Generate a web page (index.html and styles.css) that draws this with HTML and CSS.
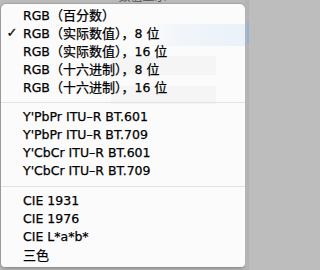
FILE: index.html
```html
<!DOCTYPE html>
<html lang="zh-CN">
<head>
<meta charset="utf-8">
<title>Menu</title>
<link rel="stylesheet" href="styles.css">
</head>
<body>
<div class="top"><span class="top-title">数值显示</span></div>
<div class="stage">
  <div class="menu">
    <div class="item"><span class="mark"></span><span class="label">RGB<span class="cjk">（百分数）</span></span></div>
    <div class="item"><span class="mark">✓</span><span class="label">RGB<span class="cjk">（实际数值），</span>8 <span class="cjk">位</span></span></div>
    <div class="item"><span class="mark"></span><span class="label">RGB<span class="cjk">（实际数值），</span>16 <span class="cjk">位</span></span></div>
    <div class="item"><span class="mark"></span><span class="label">RGB<span class="cjk">（十六进制），</span>8 <span class="cjk">位</span></span></div>
    <div class="item"><span class="mark"></span><span class="label">RGB<span class="cjk">（十六进制），</span>16 <span class="cjk">位</span></span></div>
    <div class="sep"></div>
    <div class="item"><span class="mark"></span><span class="label">Y'PbPr ITU–R BT.601</span></div>
    <div class="item"><span class="mark"></span><span class="label">Y'PbPr ITU–R BT.709</span></div>
    <div class="item"><span class="mark"></span><span class="label">Y'CbCr ITU–R BT.601</span></div>
    <div class="item"><span class="mark"></span><span class="label">Y'CbCr ITU–R BT.709</span></div>
    <div class="sep"></div>
    <div class="item"><span class="mark"></span><span class="label">CIE 1931</span></div>
    <div class="item"><span class="mark"></span><span class="label">CIE 1976</span></div>
    <div class="item"><span class="mark"></span><span class="label">CIE L*a*b*</span></div>
    <div class="item"><span class="mark"></span><span class="label cjk">三色</span></div>
  </div>
  <div class="edge"><div class="edge-blue"></div></div>
</div>
</body>
</html>
```

FILE: styles.css
```css
html, body {
  margin: 0;
  padding: 0;
}
body {
  width: 249px;
  height: 270px;
  overflow: hidden;
  background: #bdbdbd;
  font-family: "DejaVu Sans", "Noto Sans CJK SC", sans-serif;
  color: #000;
}
.top {
  height: 4px;
  overflow: hidden;
  display: flex;
  justify-content: center;
  padding-left: 36px;
}
.top-title {
  display: block;
  margin-top: -9px;
  font-size: 12px;
  line-height: 12px;
  color: #555;
}
.stage {
  display: flex;
  padding-left: 1px;
}
.menu {
  width: 244px;
  height: 263px;
  box-sizing: border-box;
  padding: 2px 0 3px;
  border-radius: 5px 5px 4px 4px;
  background-color: #fbfbfb;
  background-image:
    linear-gradient(to right, rgba(255,255,255,0) 0, rgba(255,255,255,0) 145px, rgba(230,239,248,0.5) 180px, rgba(220,233,247,0.55) 100%),
    linear-gradient(to right, rgba(0,0,0,0) 0, rgba(0,0,0,0) 110px, rgba(0,0,0,0.022) 110px, rgba(0,0,0,0.022) 215px, rgba(0,0,0,0) 215px),
    linear-gradient(to right, rgba(0,0,0,0) 0, rgba(0,0,0,0) 110px, rgba(0,0,0,0.022) 110px, rgba(0,0,0,0.022) 215px, rgba(0,0,0,0) 215px);
  background-size: 100% 22px, 100% 19px, 100% 18px;
  background-position: 0 20px, 0 52px, 0 82px;
  background-repeat: no-repeat;
  box-shadow: 0 0 0 1px rgba(0,0,0,0.08), 0 2px 6px rgba(0,0,0,0.25);
}
.item {
  display: flex;
  align-items: center;
  height: 18px;
  font-size: 12.5px;
  line-height: 18px;
  white-space: nowrap;
  -webkit-text-stroke: 0.25px #000;
}
.cjk {
  font-family: "Noto Sans CJK SC", sans-serif;
  font-size: 13px;
}
.mark {
  width: 22px;
  flex: none;
  text-align: center;
  font-size: 13px;
}
.label {
  display: block;
}
.sep {
  height: 12px;
  display: flex;
  align-items: center;
}
.sep::before {
  content: "";
  display: block;
  width: 100%;
  height: 1px;
  background: #e2e2e2;
}
.edge {
  flex: 1;
  box-sizing: border-box;
  margin-top: -4px;
  height: 270px;
  background: #b4b4b4;
  padding-top: 22px;
  padding-left: 2px;
}
.edge-blue {
  height: 22px;
  background: #8fb4dc;
}
```
